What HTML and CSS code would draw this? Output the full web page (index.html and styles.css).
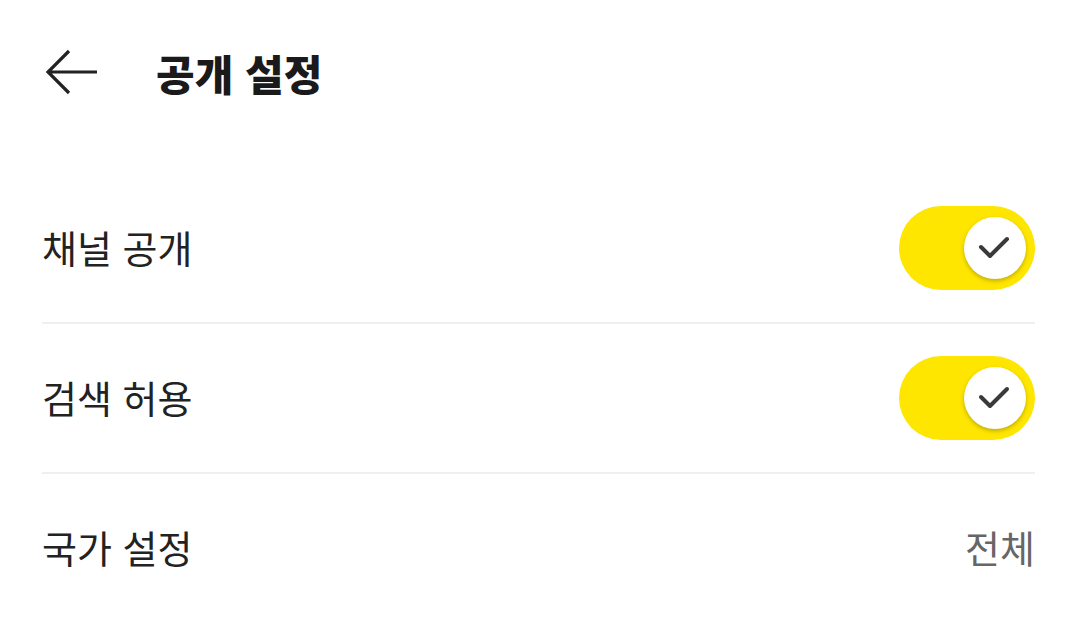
FILE: index.html
```html
<!DOCTYPE html>
<html lang="ko">
<head>
    <meta charset="UTF-8">
    <link rel="stylesheet" href="styles.css">
</head>
<body>
    <div class="page">
        <div class="header">
            <svg class="back" width="52" height="46" viewBox="0 0 52 46">
                <path d="M51 23 H3 M23 2 L2 23 L23 44" fill="none" stroke="#222" stroke-width="3.2"/>
            </svg>
            <span class="title">공개 설정</span>
        </div>

        <div class="list">
            <div class="row">
                <span class="label">채널 공개</span>
                <div class="toggle on">
                    <div class="knob">
                        <svg width="62" height="62" viewBox="0 0 62 62">
                            <polyline points="17,30 26,39 43,22" fill="none" stroke="#3a3a3a" stroke-width="4" stroke-linecap="round" stroke-linejoin="round"/>
                        </svg>
                    </div>
                </div>
            </div>
            <div class="row">
                <span class="label">검색 허용</span>
                <div class="toggle on">
                    <div class="knob">
                        <svg width="62" height="62" viewBox="0 0 62 62">
                            <polyline points="17,30 26,39 43,22" fill="none" stroke="#3a3a3a" stroke-width="4" stroke-linecap="round" stroke-linejoin="round"/>
                        </svg>
                    </div>
                </div>
            </div>
            <div class="row last">
                <span class="label">국가 설정</span>
                <span class="value">전체</span>
            </div>
        </div>
    </div>
</body>
</html>
```

FILE: styles.css
```css
body {
    margin: 0;
    background-color: #fff;
    color: #222;
    font-family: "Noto Sans CJK KR", "Noto Sans", sans-serif;
}
.page {
    padding: 0 43px 0 42px;
}
.header {
    height: 148px;
    box-sizing: border-box;
    padding-bottom: 4px;
    display: flex;
    align-items: center;
}
.back {
    margin-left: 4px;
    margin-right: 58px;
}
.title {
    font-size: 42px;
    font-weight: 900;
    color: #1a1a1a;
}
.list {
    margin-top: 26px;
}
.row {
    height: 148px;
    display: flex;
    align-items: center;
    justify-content: space-between;
    border-bottom: 2px solid #efefef;
}
.row.last {
    border-bottom: none;
}
.label {
    font-size: 38px;
    color: #222;
    padding-bottom: 4px;
}
.value {
    font-size: 38px;
    color: #666;
    padding-bottom: 4px;
}
.toggle {
    width: 136px;
    height: 84px;
    border-radius: 42px;
    background-color: #ffe600;
    display: flex;
    align-items: center;
    justify-content: flex-end;
    padding-right: 9px;
    box-sizing: border-box;
}
.knob {
    width: 62px;
    height: 62px;
    border-radius: 50%;
    background-color: #fff;
    box-shadow: 0 2px 4px rgba(0, 0, 0, 0.25);
}
.knob svg {
    display: block;
}
```
